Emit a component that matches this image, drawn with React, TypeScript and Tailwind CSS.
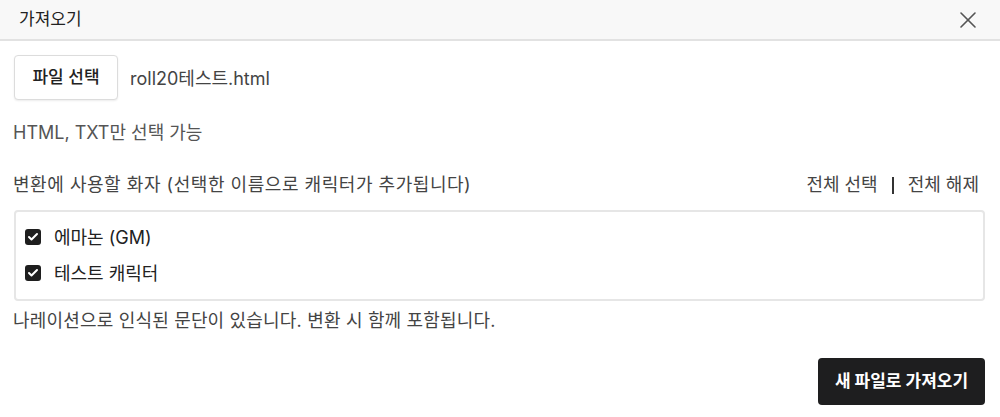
import React, { useState } from 'react';
import { X, Check } from 'lucide-react';

const FONT = "font-['Inter','Noto_Sans_CJK_KR',sans-serif]";

const speakers = ['에마논 (GM)', '테스트 캐릭터'];

const App = () => {
  const [checked, setChecked] = useState<boolean[]>([true, true]);

  const toggle = (i: number) => {
    const next = [...checked];
    next[i] = !next[i];
    setChecked(next);
  };

  return (
    <div className={`w-[1000px] h-[417px] bg-white text-[#222] ${FONT}`}>
      {/* Header */}
      <div className="h-[41px] flex items-center justify-between pl-[19px] pr-[18px] bg-[#f8f8f8] border-b-2 border-[#e2e2e2]">
        <h2 className="text-[17px] leading-none">가져오기</h2>
        <button className="text-[#555]">
          <X size={28} strokeWidth={1.4} />
        </button>
      </div>

      <div className="pl-[13px] pr-[15px]">
        {/* File select */}
        <div className="flex items-center mt-[14px] gap-[12px]">
          <button className="ml-[1px] w-[104px] h-[45px] rounded-[4px] border border-[#dcdcdc] bg-white shadow-[0_1px_2px_rgba(0,0,0,0.08)] text-[17px] font-medium text-[#222]">
            파일 선택
          </button>
          <span className="text-[18px] text-[#444] pt-[2px]">roll20테스트.html</span>
        </div>

        <p className="mt-[20px] text-[18px] text-[#555] leading-[26px]">HTML, TXT만 선택 가능</p>

        {/* Speakers label */}
        <div className="mt-[26px] flex items-center justify-between leading-[26px] text-[18px] text-[#444]">
          <span className="tracking-[0.03em]">변환에 사용할 화자 (선택한 이름으로 캐릭터가 추가됩니다)</span>
          <div className="flex items-center mr-[6px]">
            <button className="text-[#444]">전체 선택</button>
            <span className="mx-[14px] w-[2px] h-[17px] bg-[#333]" />
            <button className="text-[#444]">전체 해제</button>
          </div>
        </div>

        <div className="mt-[12px] ml-[1px] w-[971px] rounded-[4px] border-2 border-[#e6e6e6] pt-[7px] pb-[8px] px-[9px]">
          {speakers.map((name, i) => (
            <label key={name} className="flex items-center h-[36px] gap-[13px] cursor-pointer" onClick={() => toggle(i)}>
              <span
                className={`w-[16px] h-[16px] rounded-[3px] flex items-center justify-center ${
                  checked[i] ? 'bg-[#1e1e1e]' : 'border border-[#999] bg-white'
                }`}
              >
                {checked[i] && <Check size={12} strokeWidth={4} className="text-white" />}
              </span>
              <span className="text-[18px] text-[#222]">{name}</span>
            </label>
          ))}
        </div>

        <p className="mt-[7px] text-[18px] text-[#444] leading-[26px] tracking-[0.01em]">나레이션으로 인식된 문단이 있습니다. 변환 시 함께 포함됩니다.</p>

        <div className="flex justify-end mt-[24px]">
          <button className="w-[167px] h-[47px] rounded-[4px] bg-[#1e1e1f] text-white text-[17px] font-bold">
            새 파일로 가져오기
          </button>
        </div>
      </div>
    </div>
  );
};

export default App;
